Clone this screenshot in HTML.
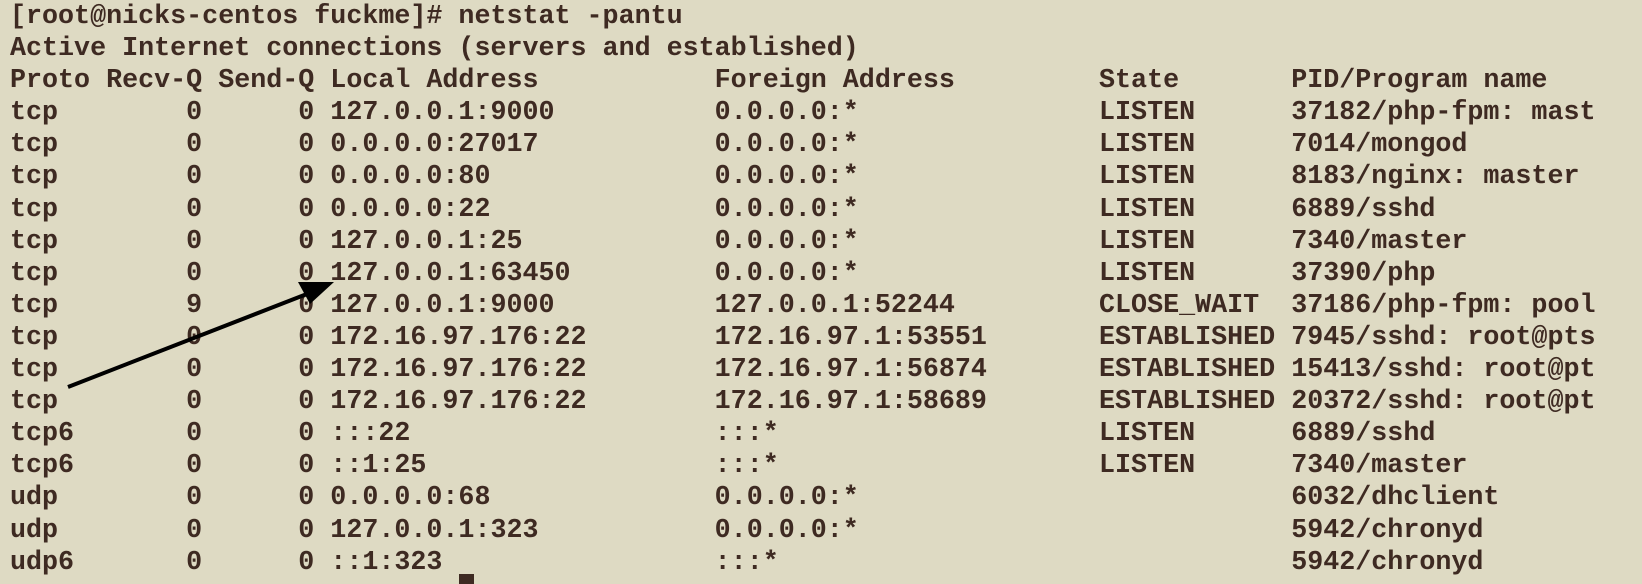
<!DOCTYPE html>
<html><head><meta charset="utf-8">
<style>
html,body{margin:0;padding:0;background:#dedac3;width:1642px;height:582px;overflow:hidden}
pre{position:absolute;left:10px;top:1px;margin:0;font-family:"Liberation Mono","Courier New",monospace;font-weight:bold;font-size:26.7px;line-height:32.1px;color:#3e2a22;white-space:pre}
svg{position:absolute;left:0;top:0}
.cur{position:absolute;left:459px;top:574px;width:15px;height:10px;background:#3e2a22}
</style></head><body>
<pre>[root@nicks-centos fuckme]# netstat -pantu
Active Internet connections (servers and established)
Proto Recv-Q Send-Q Local Address           Foreign Address         State       PID/Program name
tcp        0      0 127.0.0.1:9000          0.0.0.0:*               LISTEN      37182/php-fpm: mast
tcp        0      0 0.0.0.0:27017           0.0.0.0:*               LISTEN      7014/mongod
tcp        0      0 0.0.0.0:80              0.0.0.0:*               LISTEN      8183/nginx: master
tcp        0      0 0.0.0.0:22              0.0.0.0:*               LISTEN      6889/sshd
tcp        0      0 127.0.0.1:25            0.0.0.0:*               LISTEN      7340/master
tcp        0      0 127.0.0.1:63450         0.0.0.0:*               LISTEN      37390/php
tcp        9      0 127.0.0.1:9000          127.0.0.1:52244         CLOSE_WAIT  37186/php-fpm: pool
tcp        0      0 172.16.97.176:22        172.16.97.1:53551       ESTABLISHED 7945/sshd: root@pts
tcp        0      0 172.16.97.176:22        172.16.97.1:56874       ESTABLISHED 15413/sshd: root@pt
tcp        0      0 172.16.97.176:22        172.16.97.1:58689       ESTABLISHED 20372/sshd: root@pt
tcp6       0      0 :::22                   :::*                    LISTEN      6889/sshd
tcp6       0      0 ::1:25                  :::*                    LISTEN      7340/master
udp        0      0 0.0.0.0:68              0.0.0.0:*                           6032/dhclient
udp        0      0 127.0.0.1:323           0.0.0.0:*                           5942/chronyd
udp6       0      0 ::1:323                 :::*                                5942/chronyd</pre>
<div class="cur"></div>
<svg width="1642" height="582">
<line x1="68" y1="387" x2="312" y2="292" stroke="#000" stroke-width="4"/>
<polygon points="334,282 298,282 310,304" fill="#000"/>
</svg>
</body></html>
